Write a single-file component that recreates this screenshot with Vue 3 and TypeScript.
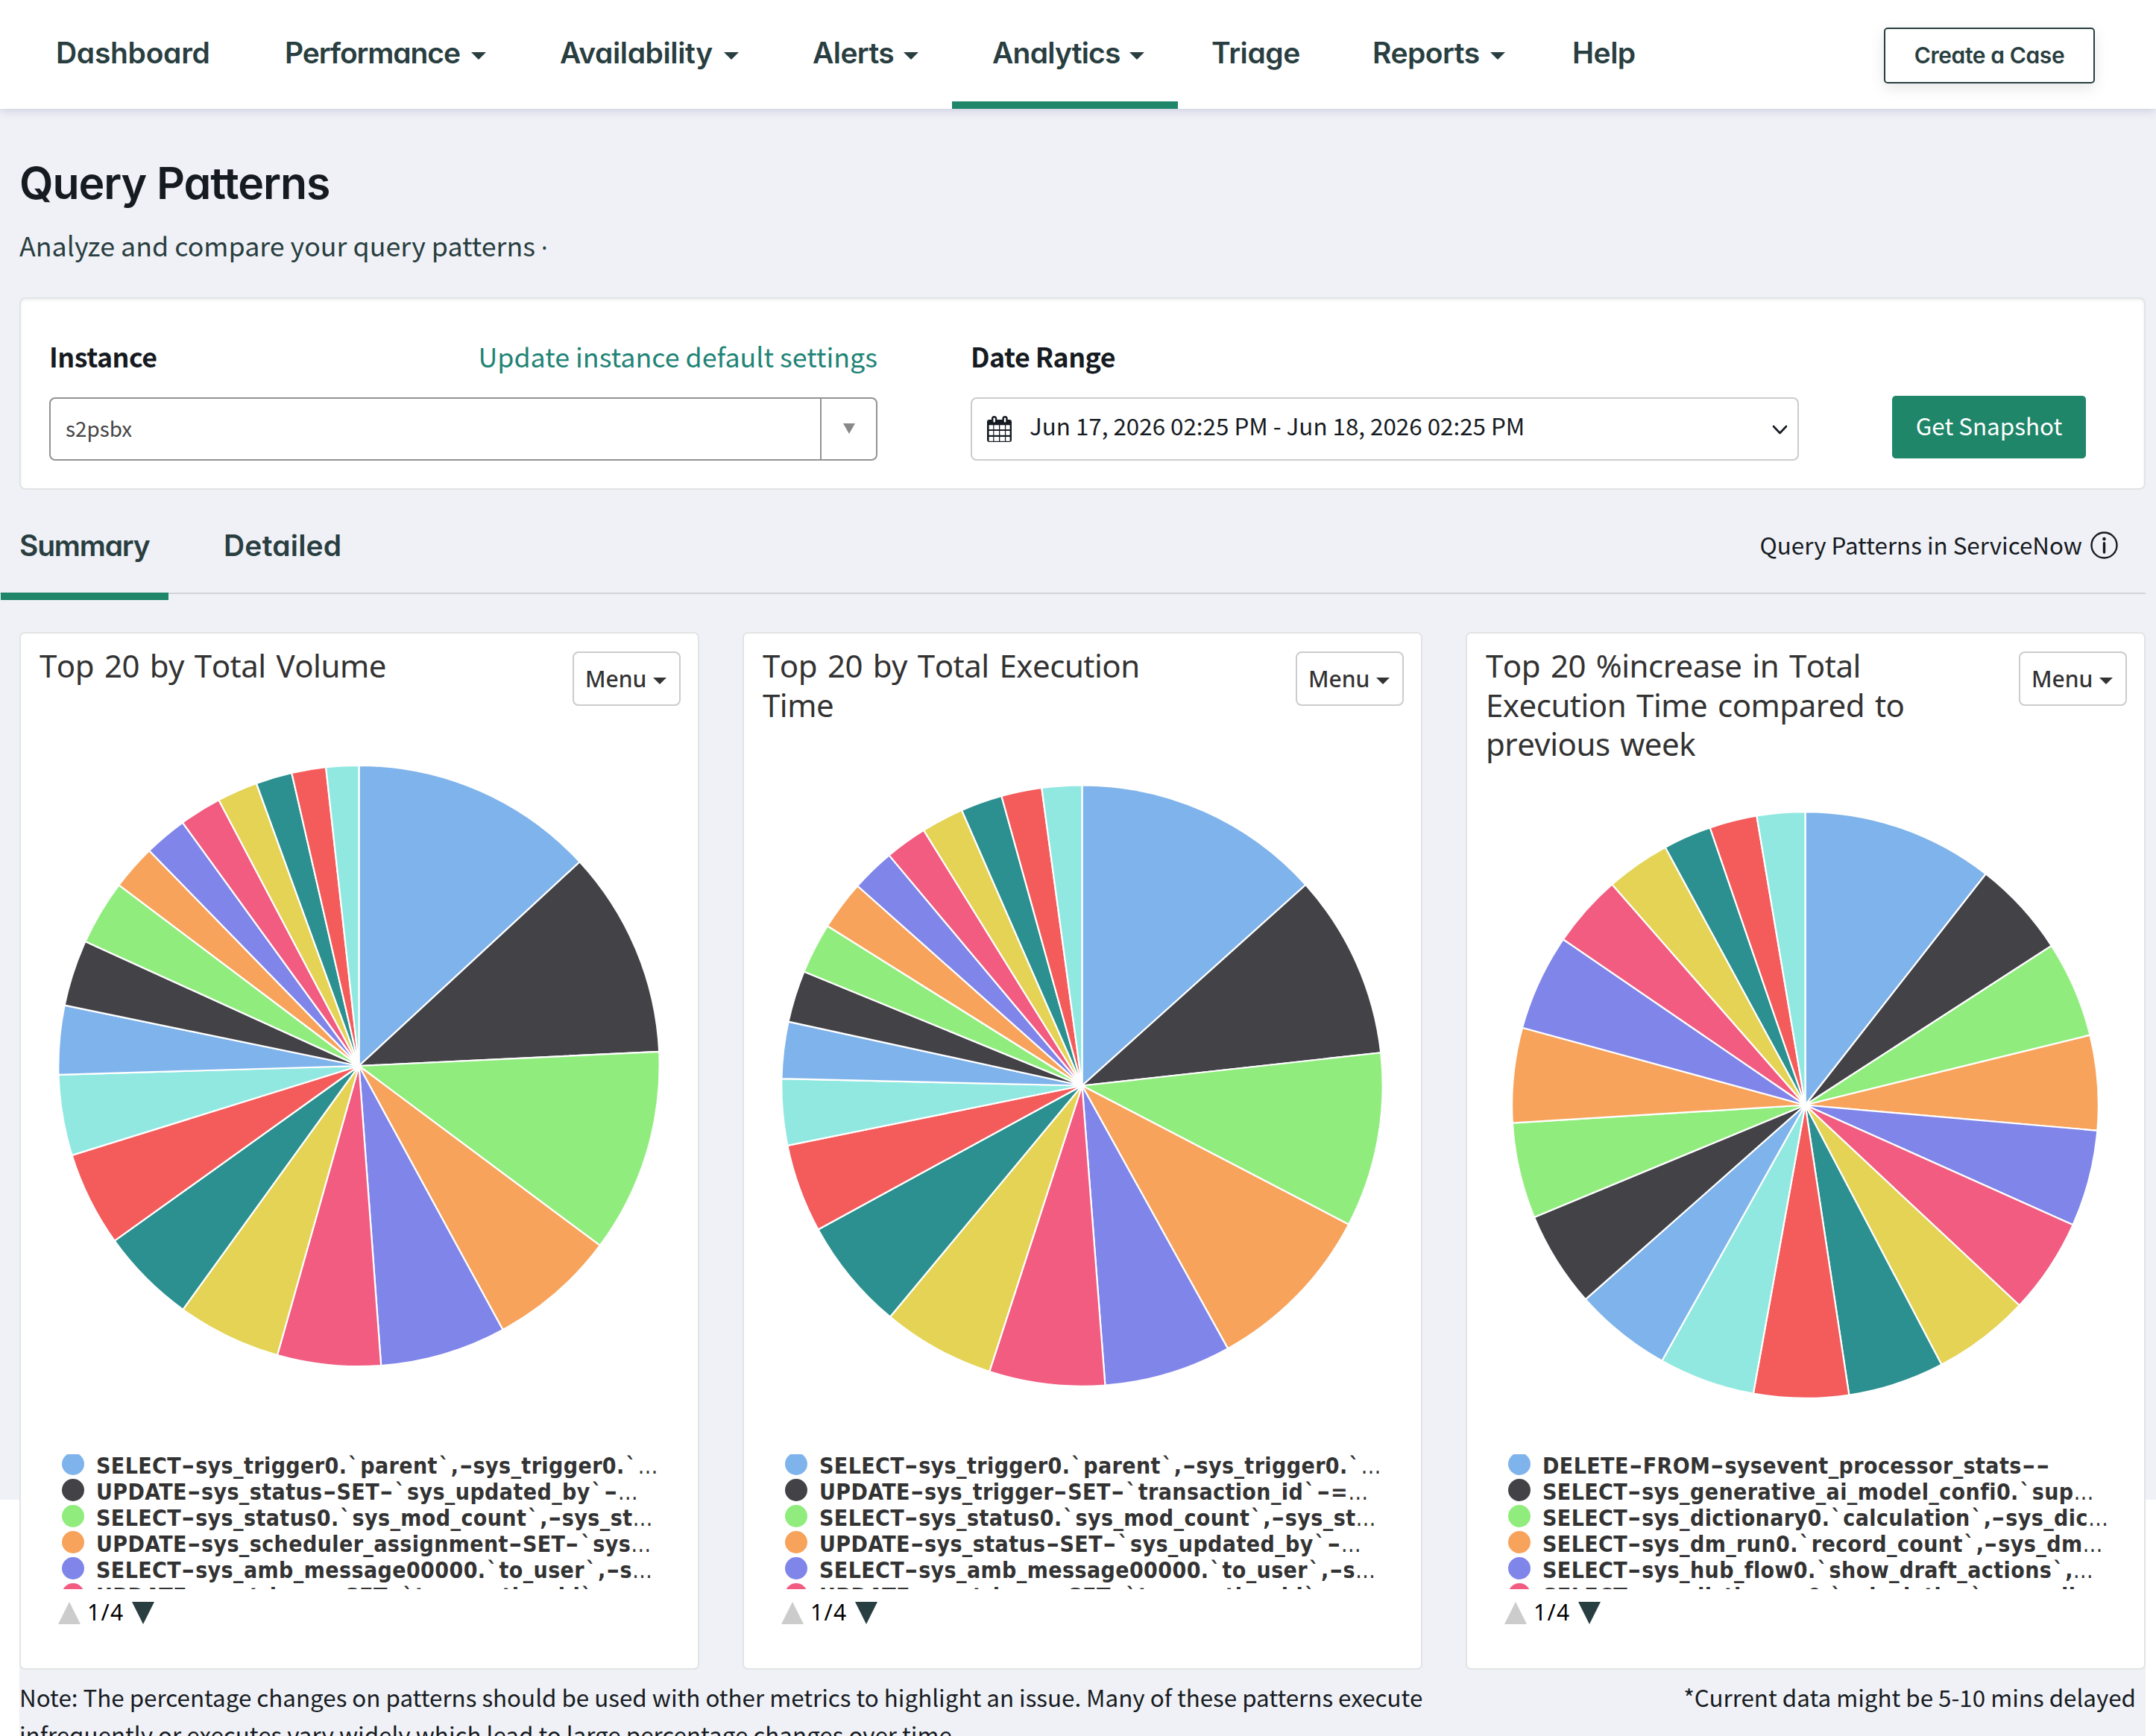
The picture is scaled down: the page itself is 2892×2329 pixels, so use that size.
<script setup lang="ts">
interface NavItem {
  label: string
  width: number
  gap: number
  tracking: number
  menu?: boolean
  active?: boolean
}

interface Chart {
  title: string[]
  cy: number
  radius: number
  angles: number[]
  legend: string[]
}

const nav: NavItem[] = [
  { label: 'Dashboard', width: 206, gap: 101, tracking: -0.3 },
  { label: 'Performance', width: 270, gap: 99, tracking: -1.1, menu: true },
  { label: 'Availability', width: 240, gap: 99, tracking: -0.4, menu: true },
  { label: 'Alerts', width: 142, gap: 99, tracking: -0.6, menu: true },
  { label: 'Analytics', width: 204, gap: 90, tracking: -0.8, menu: true, active: true },
  { label: 'Triage', width: 117, gap: 99, tracking: -0.4 },
  { label: 'Reports', width: 178, gap: 90, tracking: -0.5, menu: true },
  { label: 'Help', width: 86, gap: 0, tracking: -0.5 },
]

const palette = [
  '#7fb3eb', '#434247', '#90ed7d', '#f7a35c', '#8085e9',
  '#f15c80', '#e4d354', '#2b908f', '#f45b5b', '#91e8e1',
]

const charts: Chart[] = [
  {
    title: ['Top 20 by Total Volume'],
    cy: 410,
    radius: 403.2,
    angles: [47.25, 87.28, 126.7, 151.4, 175.78, 195.76, 215.85, 234.4, 252.7, 268.3, 281.65, 294.45, 307, 315.75, 324.07, 332.2, 340.05, 347.07, 353.68, 360],
    legend: [
      'SELECT-sys_trigger0.`parent`,-sys_trigger0.`…',
      'UPDATE-sys_status-SET-`sys_updated_by`-…',
      'SELECT-sys_status0.`sys_mod_count`,-sys_st…',
      'UPDATE-sys_scheduler_assignment-SET-`sys…',
      'SELECT-sys_amb_message00000.`to_user`,-s…',
      'UPDATE-sys_trigger-SET-`transaction_id`-=…',
    ],
  },
  {
    title: ['Top 20 by Total Execution', 'Time'],
    cy: 436.5,
    radius: 403.2,
    angles: [48.06, 83.7, 117.5, 151, 175.6, 197.96, 219.7, 241.4, 258.5, 271.33, 282.3, 292.3, 302.1, 311.65, 320.05, 328.2, 336.4, 344.45, 352.27, 360],
    legend: [
      'SELECT-sys_trigger0.`parent`,-sys_trigger0.`…',
      'UPDATE-sys_trigger-SET-`transaction_id`-=…',
      'SELECT-sys_status0.`sys_mod_count`,-sys_st…',
      'UPDATE-sys_status-SET-`sys_updated_by`-…',
      'SELECT-sys_amb_message00000.`to_user`,-s…',
      'UPDATE-sys_trigger-SET-`transaction_id`-=…',
    ],
  },
  {
    title: ['Top 20 %increase in Total', 'Execution Time compared to', 'previous week'],
    cy: 462.5,
    radius: 393.4,
    angles: [38, 57.1, 76.2, 95, 114.1, 133.1, 152.3, 171.4, 190.2, 209.25, 228.5, 247.5, 266.5, 285.3, 304.4, 318.8, 331.5, 341.05, 350.47, 360],
    legend: [
      'DELETE-FROM-sysevent_processor_stats--',
      'SELECT-sys_generative_ai_model_confi0.`sup…',
      'SELECT-sys_dictionary0.`calculation`,-sys_dic…',
      'SELECT-sys_dm_run0.`record_count`,-sys_dm…',
      'SELECT-sys_hub_flow0.`show_draft_actions`,…',
      'SELECT-sys_dictionary0.`calculation`,-sys_dic…',
    ],
  },
]

const cx = 453.5

function slices(chart: Chart): { d: string; fill: string }[] {
  const point = (deg: number): string => {
    const a = (deg * Math.PI) / 180
    return `${(cx + chart.radius * Math.sin(a)).toFixed(2)} ${(chart.cy - chart.radius * Math.cos(a)).toFixed(2)}`
  }
  return chart.angles.map((end, i) => {
    const start = i === 0 ? 0 : chart.angles[i - 1]
    return {
      d: `M${cx} ${chart.cy}L${point(start)}A${chart.radius} ${chart.radius} 0 0 1 ${point(end)}Z`,
      fill: palette[i % palette.length],
    }
  })
}

/* Splits a legend label so that hyphens, backticks and the ellipsis get their own widths. */
function parts(label: string): string[] {
  return label.split(/([-…`])/).filter((p) => p !== '')
}

function partClass(part: string): string {
  if (part === '-') return 'dash'
  if (part === '`') return 'tick'
  if (part === '…') return 'dots'
  return ''
}
</script>

<template>
  <div class="page">
    <header class="topbar">
      <nav class="nav">
        <a
          v-for="item in nav"
          :key="item.label"
          class="nav-item"
          :class="{ active: item.active }"
          :style="{ width: item.width + 'px', marginRight: item.gap + 'px' }"
        >
          <span :style="{ letterSpacing: item.tracking + 'px' }">{{ item.label }}</span>
          <svg v-if="item.menu" class="caret" width="20" height="10" viewBox="0 0 20 10"><path d="M0 0H20L10 10Z" /></svg>
        </a>
      </nav>
      <button class="case-btn">Create a Case</button>
    </header>

    <main>
      <h1>Query Patterns</h1>
      <p class="subtitle">Analyze and compare your query patterns <span class="dot">·</span></p>

      <section class="filters">
        <div class="field">
          <div class="labels">
            <label>Instance</label>
            <a>Update instance default settings</a>
          </div>
          <div class="select">
            <span class="value">s2psbx</span>
            <span class="arrow">
              <svg width="16" height="14" viewBox="0 0 16 14"><path d="M0 0H16L8 14Z" fill="#888" /></svg>
            </span>
          </div>
        </div>
        <div class="field">
          <div class="labels"><label>Date Range</label></div>
          <div class="date">
            <svg class="calendar" width="33" height="35" viewBox="0 0 33 35">
              <rect x="0" y="5" width="33" height="30" rx="3" fill="#161b22" />
              <g fill="#fff">
                <template v-for="y in [12.3, 20, 28]" :key="y">
                  <rect x="2.6" :y="y" width="5.6" height="5.8" />
                  <rect x="9.4" :y="y" width="6.6" height="5.8" />
                  <rect x="17.3" :y="y" width="6.6" height="5.8" />
                  <rect x="25.2" :y="y" width="5.4" height="5.8" />
                </template>
              </g>
              <rect x="7.2" y="1.2" width="4.9" height="8.6" rx="2.4" fill="#fff" stroke="#161b22" stroke-width="2.4" />
              <rect x="21.6" y="1.2" width="4.9" height="8.6" rx="2.4" fill="#fff" stroke="#161b22" stroke-width="2.4" />
            </svg>
            <span>Jun 17, 2026 02:25 PM - Jun 18, 2026 02:25 PM</span>
            <svg class="chevron" width="21" height="14" viewBox="0 0 21 14">
              <path d="M2 2L10.5 11L19 2" fill="none" stroke="#161b22" stroke-width="2.6" stroke-linecap="round" stroke-linejoin="round" />
            </svg>
          </div>
        </div>
        <button class="snapshot">Get Snapshot</button>
      </section>

      <div class="tabs">
        <a class="tab selected">Summary</a>
        <a class="tab">Detailed</a>
        <div class="docs">
          <span>Query Patterns in ServiceNow</span>
          <svg width="37" height="37" viewBox="0 0 37 37">
            <circle cx="18.5" cy="18.5" r="17" fill="none" stroke="#161b22" stroke-width="2.4" />
            <circle cx="18.5" cy="10" r="2.3" fill="#161b22" />
            <path d="M18.5 15.8V28" stroke="#161b22" stroke-width="3.4" stroke-linecap="round" />
          </svg>
        </div>
      </div>

      <div class="cards">
        <article v-for="chart in charts" :key="chart.title[0]" class="card">
          <div class="card-head">
            <h2><span v-for="line in chart.title" :key="line">{{ line }}</span></h2>
            <button class="menu">
              Menu
              <svg width="18" height="9" viewBox="0 0 18 9"><path d="M0 0H18L9 9Z" fill="#333" /></svg>
            </button>
          </div>
          <svg class="pie" width="907" height="931" viewBox="0 0 907 931">
            <path v-for="(s, i) in slices(chart)" :key="i" :d="s.d" :fill="s.fill" stroke="#fff" stroke-width="2.2" stroke-linejoin="round" />
          </svg>
          <ul class="legend">
            <li v-for="(label, i) in chart.legend" :key="i">
              <i :style="{ background: palette[i] }"></i>
              <span class="text"><span v-for="(p, j) in parts(label)" :key="j" :class="partClass(p)">{{ p }}</span></span>
            </li>
          </ul>
          <div class="pager">
            <svg width="30" height="30" viewBox="0 0 30 30"><path d="M15 0L30 30H0Z" fill="#ccc" /></svg>
            <span>1/4</span>
            <svg width="30" height="30" viewBox="0 0 30 30"><path d="M0 0H30L15 30Z" fill="#293e40" /></svg>
          </div>
        </article>
      </div>

      <footer class="notes">
        <p class="note">Note: The percentage changes on patterns should be used with other metrics to highlight an issue. Many of these patterns execute infrequently or executes vary widely which lead to large percentage changes over time.</p>
        <p>*Current data might be 5-10 mins delayed</p>
      </footer>
    </main>
  </div>
</template>

<style>
body {
  background: #fff;
}
</style>

<style scoped>
.page {
  width: 2892px;
  height: 2329px;
  overflow: hidden;
  background:
    linear-gradient(#f0f1f6, #f0f1f6) 0 0 / 100% 2012px no-repeat,
    linear-gradient(#f0f1f6, #f0f1f6) 26px 0 / 2852px 100% no-repeat;
  font-family: "Noto Sans CJK SC", "Noto Sans", sans-serif;
  font-size: 31.35px;
  color: #161b22;
}

h1,
h2,
p,
ul {
  margin: 0;
  padding: 0;
}

button {
  display: flex;
  box-sizing: border-box;
  margin: 0;
  padding: 0;
}

.topbar {
  position: relative;
  display: flex;
  justify-content: space-between;
  height: 146px;
  padding: 0 82px 0 75px;
  background: #fff;
  box-shadow: 0 2px 12px #c8c9dc;
}

.nav {
  display: flex;
}

.nav-item {
  position: relative;
  display: flex;
  justify-content: space-between;
  height: 146px;
  line-height: 142px;
  white-space: nowrap;
  font-family: Inter, sans-serif;
  font-feature-settings: "cv11";
  font-weight: 600;
  font-size: 39px;
  color: #293e40;
}

.caret {
  margin-top: 70px;
  fill: #293e40;
}

.nav-item.active::after {
  content: "";
  position: absolute;
  left: -54px;
  right: -45px;
  bottom: 0;
  height: 10px;
  background: #1f8669;
}

.case-btn {
  justify-content: center;
  width: 283px;
  height: 75px;
  margin-top: 37px;
  border: 2px solid #293e40;
  border-radius: 5px;
  background: #fff;
  box-shadow: 0 6px 20px rgba(0, 0, 0, 0.1);
  font: 600 30px/71px Inter, sans-serif;
  font-feature-settings: "cv11";
  letter-spacing: -0.4px;
  color: #293e40;
}

main {
  padding-top: 64px;
}

h1 {
  margin-left: 26px;
  font: 600 59px/72px Inter, sans-serif;
  font-feature-settings: "cv11";
  letter-spacing: -1.1px;
}

.subtitle {
  height: 50px;
  margin: 21px 0 0 26px;
  font-size: 35.8px;
  line-height: 50px;
  color: #293e40;
}

.dot {
  font: 400 32px/1 "Noto Sans", sans-serif;
}

.filters {
  display: flex;
  gap: 125px;
  box-sizing: border-box;
  width: 2852px;
  height: 258px;
  margin: 46px 0 0 26px;
  padding: 51px 0 0 38px;
  border: 2px solid #e2e3e4;
  border-radius: 8px;
  background: #fff;
  box-shadow: inset 0 2px 4px rgba(0, 0, 0, 0.06);
}

.field {
  width: 1111px;
}

.labels {
  display: flex;
  justify-content: space-between;
  margin-bottom: 31px;
  font-size: 35.8px;
  line-height: 50px;
}

.labels label {
  font-weight: 600;
  letter-spacing: -0.5px;
}

.labels a {
  color: #1f8476;
}

.select,
.date {
  display: flex;
  box-sizing: border-box;
  height: 85px;
  border: 2px solid #939393;
  border-radius: 8px;
}

.value {
  flex: 1;
  padding-left: 20px;
  font-size: 27.8px;
  line-height: 78px;
  color: #444;
}

.arrow {
  display: flex;
  justify-content: center;
  width: 73px;
  border-left: 2px solid #939393;
}

.arrow svg {
  margin-top: 33px;
}

.date {
  border-color: #ccc;
  line-height: 71px;
}

.calendar {
  margin: 23px 24px 0 20px;
}

.chevron {
  margin: 35px 13px 0 auto;
}

.snapshot {
  justify-content: center;
  width: 260px;
  height: 84px;
  margin-top: 79px;
  border: 0;
  border-radius: 5px;
  background: #1f8669;
  font: 400 31.4px/80px "Noto Sans CJK SC", sans-serif;
  color: #fff;
}

.tabs {
  display: flex;
  box-sizing: border-box;
  width: 2878px;
  height: 140px;
  padding-top: 45px;
  border-bottom: 2px solid #d1d4d8;
}

.tab {
  position: relative;
  height: 93px;
  padding-left: 26px;
  font: 600 39px/60px Inter, sans-serif;
  font-feature-settings: "cv11";
  letter-spacing: -1.2px;
  color: #293e40;
}

.tab.selected {
  width: 200px;
  margin-right: 48px;
}

.tab + .tab {
  letter-spacing: 0.2px;
}

.tab.selected::after {
  content: "";
  position: absolute;
  left: 1px;
  right: 0;
  top: 92.5px;
  height: 10.5px;
  background: #1f8669;
}

.docs {
  display: flex;
  gap: 11px;
  margin: 9px 37px 0 auto;
  line-height: 40px;
}

.docs svg {
  margin-top: 2px;
}

.cards {
  display: flex;
  gap: 58px;
  width: 2852px;
  margin: 51px 0 0 26px;
}

.card {
  flex: 1;
  box-sizing: border-box;
  height: 1392px;
  border: 2px solid #e2e3e4;
  border-radius: 7px;
  background: #fff;
}

.card-head {
  display: flex;
  justify-content: space-between;
  height: 170px;
  padding: 0 23px 0 25px;
}

h2 {
  display: flex;
  flex-direction: column;
  padding-top: 17px;
  font: 400 42px/52.6px "Noto Sans", sans-serif;
  font-kerning: none;
  letter-spacing: -0.5px;
  word-spacing: 3.4px;
  white-space: nowrap;
  color: #333;
}

.menu {
  gap: 9px;
  width: 145px;
  height: 73px;
  margin-top: 23.5px;
  padding-left: 15px;
  border: 2px solid #ccc;
  border-radius: 8px;
  background: #fff;
  font: 500 30px/70px "Noto Sans", sans-serif;
  color: #333;
}

.menu svg {
  margin-top: 33px;
}

.pie {
  display: block;
}

.legend {
  height: 181px;
  padding-left: 55px;
  overflow: hidden;
  list-style: none;
}

.legend li {
  display: flex;
  gap: 16px;
  height: 35px;
}

.legend li:first-child {
  margin-top: -4.5px;
}

.legend i {
  width: 30px;
  height: 30px;
  margin-top: 2.5px;
  border-radius: 50%;
}

.legend .text {
  padding-top: 2px;
  font: 700 30px/35px "DejaVu Sans Condensed", "DejaVu Sans", sans-serif;
  font-stretch: condensed;
  letter-spacing: 0.4px;
  white-space: nowrap;
  color: #333;
}

.dash {
  display: inline-block;
  width: 19px;
  text-align: center;
  transform: scaleX(1.6);
}

.tick {
  margin: 0 2px;
}

.dots {
  font-weight: 400;
}

.pager {
  display: flex;
  height: 30px;
  margin: 17px 0 0 50px;
}

.pager span {
  width: 69px;
  box-sizing: border-box;
  padding-left: 9px;
  font: 400 30px/27px "Noto Sans", sans-serif;
  letter-spacing: 1.4px;
  color: #000;
}

.notes {
  display: flex;
  justify-content: space-between;
  width: 2839px;
  margin: 12px 0 0 26px;
  line-height: 50px;
}

.note {
  width: 1895px;
}
</style>
